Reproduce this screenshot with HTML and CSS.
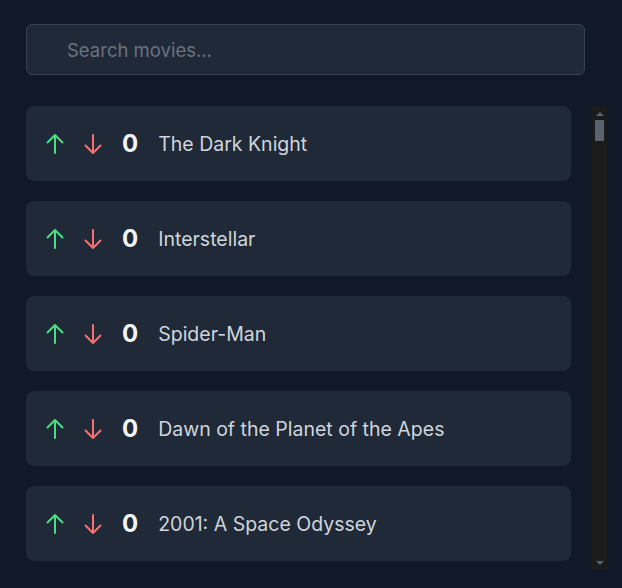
FILE: index.html
```html
<!DOCTYPE html>
<html lang="en">
<head>
<meta charset="utf-8">
<title>Movies</title>
<link rel="stylesheet" href="styles.css">
</head>
<body>
<main class="app">
  <div class="search">
    <input class="search-input" type="text" placeholder="Search movies...">
  </div>
  <div class="list-wrap">
    <ul class="movie-list" id="list">
      <li class="movie">
        <button class="vote up" aria-label="Upvote"><svg viewBox="0 0 24 24" fill="none" stroke="currentColor" stroke-width="2" stroke-linecap="round" stroke-linejoin="round"><path d="M4.5 10.5 12 3m0 0 7.5 7.5M12 3v18"/></svg></button>
        <button class="vote down" aria-label="Downvote"><svg viewBox="0 0 24 24" fill="none" stroke="currentColor" stroke-width="2" stroke-linecap="round" stroke-linejoin="round"><path d="M19.5 13.5 12 21m0 0-7.5-7.5M12 21V3"/></svg></button>
        <span class="score">0</span>
        <span class="title">The Dark Knight</span>
      </li>
      <li class="movie">
        <button class="vote up" aria-label="Upvote"><svg viewBox="0 0 24 24" fill="none" stroke="currentColor" stroke-width="2" stroke-linecap="round" stroke-linejoin="round"><path d="M4.5 10.5 12 3m0 0 7.5 7.5M12 3v18"/></svg></button>
        <button class="vote down" aria-label="Downvote"><svg viewBox="0 0 24 24" fill="none" stroke="currentColor" stroke-width="2" stroke-linecap="round" stroke-linejoin="round"><path d="M19.5 13.5 12 21m0 0-7.5-7.5M12 21V3"/></svg></button>
        <span class="score">0</span>
        <span class="title">Interstellar</span>
      </li>
      <li class="movie">
        <button class="vote up" aria-label="Upvote"><svg viewBox="0 0 24 24" fill="none" stroke="currentColor" stroke-width="2" stroke-linecap="round" stroke-linejoin="round"><path d="M4.5 10.5 12 3m0 0 7.5 7.5M12 3v18"/></svg></button>
        <button class="vote down" aria-label="Downvote"><svg viewBox="0 0 24 24" fill="none" stroke="currentColor" stroke-width="2" stroke-linecap="round" stroke-linejoin="round"><path d="M19.5 13.5 12 21m0 0-7.5-7.5M12 21V3"/></svg></button>
        <span class="score">0</span>
        <span class="title">Spider-Man</span>
      </li>
      <li class="movie">
        <button class="vote up" aria-label="Upvote"><svg viewBox="0 0 24 24" fill="none" stroke="currentColor" stroke-width="2" stroke-linecap="round" stroke-linejoin="round"><path d="M4.5 10.5 12 3m0 0 7.5 7.5M12 3v18"/></svg></button>
        <button class="vote down" aria-label="Downvote"><svg viewBox="0 0 24 24" fill="none" stroke="currentColor" stroke-width="2" stroke-linecap="round" stroke-linejoin="round"><path d="M19.5 13.5 12 21m0 0-7.5-7.5M12 21V3"/></svg></button>
        <span class="score">0</span>
        <span class="title">Dawn of the Planet of the Apes</span>
      </li>
      <li class="movie">
        <button class="vote up" aria-label="Upvote"><svg viewBox="0 0 24 24" fill="none" stroke="currentColor" stroke-width="2" stroke-linecap="round" stroke-linejoin="round"><path d="M4.5 10.5 12 3m0 0 7.5 7.5M12 3v18"/></svg></button>
        <button class="vote down" aria-label="Downvote"><svg viewBox="0 0 24 24" fill="none" stroke="currentColor" stroke-width="2" stroke-linecap="round" stroke-linejoin="round"><path d="M19.5 13.5 12 21m0 0-7.5-7.5M12 21V3"/></svg></button>
        <span class="score">0</span>
        <span class="title">2001: A Space Odyssey</span>
      </li>
    </ul>
    <div class="scrollbar" aria-hidden="true">
      <span class="sb-button"><span class="sb-arrow sb-arrow-up"></span></span>
      <span class="sb-thumb"></span>
      <span class="sb-track"></span>
      <span class="sb-button"><span class="sb-arrow sb-arrow-down"></span></span>
    </div>
  </div>
</main>
</body>
</html>
```

FILE: styles.css
```css
* { box-sizing: border-box; }
html, body { margin: 0; padding: 0; }
body {
  background: #111827;
  font-family: Inter, "Noto Sans", sans-serif;
  color: #d1d5db;
}
.app {
  padding: 24px 15px 0 26px;
  display: flex;
  flex-direction: column;
  gap: 31px;
}
.search { width: 559px; }
.search-input {
  width: 100%;
  height: 51px;
  background: #1f2937;
  border: 1px solid #374151;
  border-radius: 6px;
  padding: 0 16px 0 40px;
  font-family: inherit;
  font-size: 18.5px;
  color: #d1d5db;
  outline: none;
}
.search-input::placeholder { color: #6b7280; }
.list-wrap {
  display: flex;
  gap: 21px;
  height: 463px;
}
.movie-list {
  list-style: none;
  margin: 0;
  padding: 0;
  width: 545px;
  height: 462px;
  overflow-y: auto;
  scrollbar-width: none;
  display: flex;
  flex-direction: column;
  gap: 20px;
}
.movie {
  flex: none;
  height: 75px;
  background: #1f2937;
  border-radius: 8px;
  display: flex;
  align-items: center;
  padding: 0 17px;
}
.vote {
  background: none;
  border: 0;
  padding: 0;
  width: 24px;
  height: 24px;
  display: flex;
  cursor: pointer;
}
.vote svg { width: 24px; height: 24px; }
.up { color: #4ade80; margin-right: 14px; }
.down { color: #f87171; margin-right: 17px; }
.score {
  font-size: 24px;
  font-weight: 700;
  color: #f3f4f6;
  margin-right: 20px;
}
.title { font-size: 19.5px; }

.scrollbar {
  width: 15px;
  height: 463px;
  background: #1b1b1b;
  display: flex;
  flex-direction: column;
  align-items: center;
}
.sb-button {
  height: 14px;
  width: 15px;
  display: flex;
  justify-content: center;
  padding-top: 6px;
}
.sb-arrow {
  width: 0;
  height: 0;
  border-left: 4px solid transparent;
  border-right: 4px solid transparent;
}
.sb-arrow-up { border-bottom: 4px solid #5b6270; }
.sb-arrow-down { border-top: 4px solid #5b6270; }
.sb-thumb {
  width: 9px;
  height: 21px;
  background: #5b6270;
  margin-left: -1px;
}
.sb-track { flex: 1; }
```
